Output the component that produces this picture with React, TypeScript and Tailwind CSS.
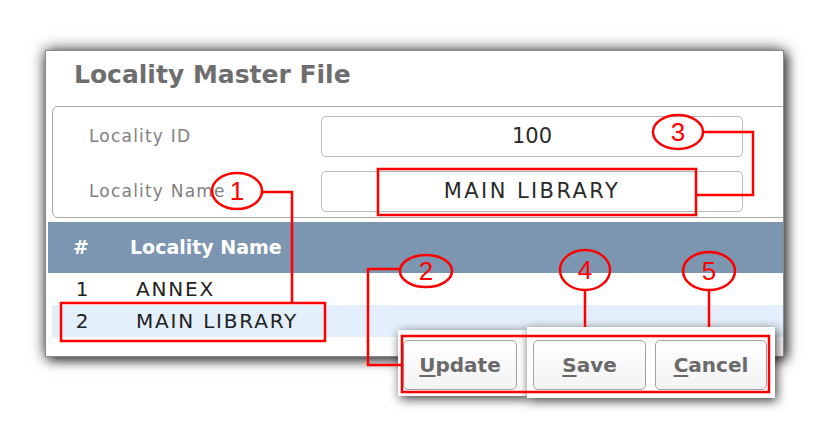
import React from "react";

const rows = [
  { id: 1, name: "ANNEX" },
  { id: 2, name: "MAIN LIBRARY" },
];

function Field({ label, value, wide }: { label: string; value: string; wide?: boolean }) {
  return (
    <div className="flex items-center h-[41px]">
      <div className="w-[268px] pl-[36px] text-[17px] tracking-[1.2px] text-[#808080]">{label}</div>
      <div
        className={
          "w-[422px] h-[41px] border border-[#b9b9b9] rounded-[5px] flex items-center justify-center text-[21px] text-[#2b2b2b] " +
          (wide ? "tracking-[2.4px]" : "tracking-[0px]")
        }
      >
        {value}
      </div>
    </div>
  );
}

function ActionButton({ label, className }: { label: string; className: string }) {
  return (
    <button
      className={
        "h-[50px] border border-[#a3a3a3] rounded-[5px] bg-gradient-to-b from-white to-[#f3f3f3] text-[20px] font-bold text-[#6a6a6a] flex items-center justify-center " +
        className
      }
    >
      <span className="underline underline-offset-[3px] decoration-[1.5px]">{label[0]}</span>
      {label.slice(1)}
    </button>
  );
}

function Callout({ cx, cy, rx, ry, n }: { cx: number; cy: number; rx: number; ry: number; n: string }) {
  return (
    <g>
      <ellipse cx={cx} cy={cy} rx={rx} ry={ry} fill="none" stroke="#ff0000" strokeWidth={2.5} />
      <text
        x={cx}
        y={cy + 9}
        textAnchor="middle"
        fill="#ff0000"
        fontSize={26}
        fontFamily="'Liberation Sans', Arial, sans-serif"
      >
        {n}
      </text>
    </g>
  );
}

export default function App() {
  return (
    <div className="relative w-[814px] h-[434px] bg-white overflow-hidden font-['DejaVu_Sans',sans-serif]">
      {/* window */}
      <div className="ml-[45px] mt-[50px] w-[739px] h-[307px] border border-[#8a8a8a] bg-white overflow-hidden shadow-[0_0_14px_rgba(0,0,0,0.75),4px_4px_10px_rgba(0,0,0,0.5)]">
        <div className="h-[55px] pl-[28px] pt-[5px] text-[25px] font-bold text-[#6e6e6e]">Locality Master File</div>

        <div className="ml-[6px] w-[760px] h-[112px] border border-[#a9a9a9] rounded-[6px] pt-[9px] flex flex-col gap-[14px]">
          <Field label="Locality ID" value="100" />
          <Field label="Locality Name" value="MAIN LIBRARY" wide />
        </div>

        <div className="mt-[4px] ml-[2px] h-[51px] bg-[#7c95b0] flex items-center text-white font-bold text-[19px]">
          <div className="w-[66px] text-center">#</div>
          <div className="pl-[16px]">Locality Name</div>
        </div>

        <div className="ml-[6px]">
          {rows.map((r) => (
            <div
              key={r.id}
              className={
                "h-[32px] flex items-center text-[20px] text-[#222] " + (r.id === 2 ? "bg-[#e3effb]" : "")
              }
            >
              <div className="w-[60px] text-center">{r.id}</div>
              <div className="pl-[24px] tracking-[1.8px]">{r.name}</div>
            </div>
          ))}
        </div>
      </div>

      {/* floating button panels */}
      <div className="absolute left-[398px] top-[330px] w-[129px] h-[66px] bg-white shadow-[2px_3px_10px_rgba(0,0,0,0.75)] pl-[5px] pt-[10px]">
        <ActionButton label="Update" className="w-[114px]" />
      </div>
      <div className="absolute left-[527px] top-[327px] w-[248px] h-[71px] bg-white shadow-[2px_3px_10px_rgba(0,0,0,0.75)] pl-[6px] pt-[13px] flex gap-[9px]">
        <ActionButton label="Save" className="w-[113px]" />
        <ActionButton label="Cancel" className="w-[112px]" />
      </div>

      {/* annotations */}
      <svg className="absolute inset-0 pointer-events-none" width={814} height={434}>
        <g fill="none" stroke="#ff0000" strokeWidth={2.5}>
          <rect x={61} y={303} width={264} height={38} />
          <rect x={378} y={169} width={318} height={46} />
          <rect x={402} y={336} width={367} height={56} />
          <path d="M262 192 H292 V303" />
          <path d="M703 132 H753 V195 H696" />
          <path d="M400 269 H368 V365 H402" />
          <path d="M585 290 V327" />
          <path d="M709 290 V327" />
        </g>
        <Callout cx={237} cy={191} rx={25} ry={18} n="1" />
        <Callout cx={426} cy={271} rx={26} ry={16} n="2" />
        <Callout cx={678} cy={132} rx={25} ry={17} n="3" />
        <Callout cx={585} cy={270} rx={25} ry={20} n="4" />
        <Callout cx={709} cy={271} rx={26} ry={19} n="5" />
      </svg>
    </div>
  );
}
